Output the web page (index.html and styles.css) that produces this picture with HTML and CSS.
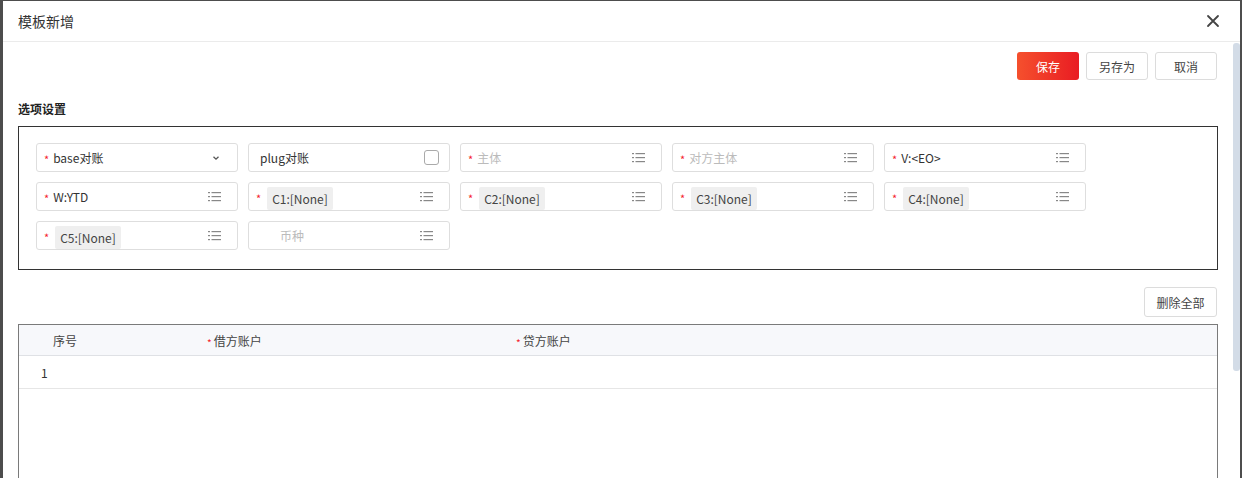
FILE: index.html
```html
<!DOCTYPE html>
<html lang="zh-CN">
<head>
  <meta charset="UTF-8">
  <title>模板新增</title>
  <link rel="stylesheet" href="styles.css">
</head>
<body>
  <div class="modal">
    <div class="modal-header">
      <span class="modal-title">模板新增</span>
      <svg class="close" width="14" height="14" viewBox="0 0 14 14"><path d="M2 2L12 12M12 2L2 12" stroke="#444" stroke-width="1.8" stroke-linecap="round"/></svg>
    </div>
    <div class="modal-body">
      <div class="content">
        <div class="toolbar">
          <button class="btn btn-primary">保存</button>
          <button class="btn">另存为</button>
          <button class="btn">取消</button>
        </div>

        <div class="section-title">选项设置</div>

        <div class="options">
          <div class="field">
            <span class="req">*</span><span class="val">base对账</span>
            <svg class="ico" width="10" height="10" viewBox="0 0 10 10"><path d="M2.5 3.8L5 6.2L7.5 3.8" fill="none" stroke="#555" stroke-width="1.3"/></svg>
          </div>
          <div class="field">
            <span class="val plain">plug对账</span>
            <span class="checkbox"></span>
          </div>
          <div class="field">
            <span class="req">*</span><span class="val ph">主体</span>
            <svg class="ico list" width="13" height="11" viewBox="0 0 13 11"><g fill="#888"><rect x="0" y="1" width="2" height="1.2"/><rect x="0" y="5" width="2" height="1.2"/><rect x="0" y="9" width="2" height="1.2"/><rect x="3.5" y="1" width="9.5" height="1.2"/><rect x="3.5" y="5" width="9.5" height="1.2"/><rect x="3.5" y="9" width="9.5" height="1.2"/></g></svg>
          </div>
          <div class="field">
            <span class="req">*</span><span class="val ph">对方主体</span>
            <svg class="ico list" width="13" height="11" viewBox="0 0 13 11"><g fill="#888"><rect x="0" y="1" width="2" height="1.2"/><rect x="0" y="5" width="2" height="1.2"/><rect x="0" y="9" width="2" height="1.2"/><rect x="3.5" y="1" width="9.5" height="1.2"/><rect x="3.5" y="5" width="9.5" height="1.2"/><rect x="3.5" y="9" width="9.5" height="1.2"/></g></svg>
          </div>
          <div class="field">
            <span class="req">*</span><span class="val">V:&lt;EO&gt;</span>
            <svg class="ico list" width="13" height="11" viewBox="0 0 13 11"><g fill="#888"><rect x="0" y="1" width="2" height="1.2"/><rect x="0" y="5" width="2" height="1.2"/><rect x="0" y="9" width="2" height="1.2"/><rect x="3.5" y="1" width="9.5" height="1.2"/><rect x="3.5" y="5" width="9.5" height="1.2"/><rect x="3.5" y="9" width="9.5" height="1.2"/></g></svg>
          </div>

          <div class="field">
            <span class="req">*</span><span class="val">W:YTD</span>
            <svg class="ico list" width="13" height="11" viewBox="0 0 13 11"><g fill="#888"><rect x="0" y="1" width="2" height="1.2"/><rect x="0" y="5" width="2" height="1.2"/><rect x="0" y="9" width="2" height="1.2"/><rect x="3.5" y="1" width="9.5" height="1.2"/><rect x="3.5" y="5" width="9.5" height="1.2"/><rect x="3.5" y="9" width="9.5" height="1.2"/></g></svg>
          </div>
          <div class="field">
            <span class="req">*</span><span class="tag">C1:[None]</span>
            <svg class="ico list" width="13" height="11" viewBox="0 0 13 11"><g fill="#888"><rect x="0" y="1" width="2" height="1.2"/><rect x="0" y="5" width="2" height="1.2"/><rect x="0" y="9" width="2" height="1.2"/><rect x="3.5" y="1" width="9.5" height="1.2"/><rect x="3.5" y="5" width="9.5" height="1.2"/><rect x="3.5" y="9" width="9.5" height="1.2"/></g></svg>
          </div>
          <div class="field">
            <span class="req">*</span><span class="tag">C2:[None]</span>
            <svg class="ico list" width="13" height="11" viewBox="0 0 13 11"><g fill="#888"><rect x="0" y="1" width="2" height="1.2"/><rect x="0" y="5" width="2" height="1.2"/><rect x="0" y="9" width="2" height="1.2"/><rect x="3.5" y="1" width="9.5" height="1.2"/><rect x="3.5" y="5" width="9.5" height="1.2"/><rect x="3.5" y="9" width="9.5" height="1.2"/></g></svg>
          </div>
          <div class="field">
            <span class="req">*</span><span class="tag">C3:[None]</span>
            <svg class="ico list" width="13" height="11" viewBox="0 0 13 11"><g fill="#888"><rect x="0" y="1" width="2" height="1.2"/><rect x="0" y="5" width="2" height="1.2"/><rect x="0" y="9" width="2" height="1.2"/><rect x="3.5" y="1" width="9.5" height="1.2"/><rect x="3.5" y="5" width="9.5" height="1.2"/><rect x="3.5" y="9" width="9.5" height="1.2"/></g></svg>
          </div>
          <div class="field">
            <span class="req">*</span><span class="tag">C4:[None]</span>
            <svg class="ico list" width="13" height="11" viewBox="0 0 13 11"><g fill="#888"><rect x="0" y="1" width="2" height="1.2"/><rect x="0" y="5" width="2" height="1.2"/><rect x="0" y="9" width="2" height="1.2"/><rect x="3.5" y="1" width="9.5" height="1.2"/><rect x="3.5" y="5" width="9.5" height="1.2"/><rect x="3.5" y="9" width="9.5" height="1.2"/></g></svg>
          </div>

          <div class="field">
            <span class="req">*</span><span class="tag">C5:[None]</span>
            <svg class="ico list" width="13" height="11" viewBox="0 0 13 11"><g fill="#888"><rect x="0" y="1" width="2" height="1.2"/><rect x="0" y="5" width="2" height="1.2"/><rect x="0" y="9" width="2" height="1.2"/><rect x="3.5" y="1" width="9.5" height="1.2"/><rect x="3.5" y="5" width="9.5" height="1.2"/><rect x="3.5" y="9" width="9.5" height="1.2"/></g></svg>
          </div>
          <div class="field">
            <span class="val ph plain-ph">币种</span>
            <svg class="ico list" width="13" height="11" viewBox="0 0 13 11"><g fill="#888"><rect x="0" y="1" width="2" height="1.2"/><rect x="0" y="5" width="2" height="1.2"/><rect x="0" y="9" width="2" height="1.2"/><rect x="3.5" y="1" width="9.5" height="1.2"/><rect x="3.5" y="5" width="9.5" height="1.2"/><rect x="3.5" y="9" width="9.5" height="1.2"/></g></svg>
          </div>
        </div>

        <div class="table-tools">
          <button class="btn btn-wide">删除全部</button>
        </div>

        <div class="grid-table">
          <div class="tr th">
            <div class="cell c-seq">序号</div>
            <div class="cell c-debit"><span class="req">*</span>借方账户</div>
            <div class="cell c-credit"><span class="req">*</span>贷方账户</div>
          </div>
          <div class="tr">
            <div class="cell c-seq-row">1</div>
            <div class="cell c-debit"></div>
            <div class="cell c-credit"></div>
          </div>
        </div>
      </div>
      <div class="scroll-thumb"></div>
    </div>
  </div>
</body>
</html>
```

FILE: styles.css
```css
html, body {
  margin: 0;
  height: 478px;
  overflow: hidden;
}
body {
  background-color: #4d4d4d;
  font-family: "Noto Sans CJK SC", "Noto Sans", sans-serif;
  font-size: 12px;
  color: #333;
}
.modal {
  margin: 1px 2px 0 3px;
  height: 477px;
  background-color: #fff;
  display: flex;
  flex-direction: column;
  overflow: hidden;
}
.modal-header {
  height: 40px;
  flex: none;
  border-bottom: 1px solid #ebebeb;
  display: flex;
  align-items: center;
  justify-content: space-between;
  padding: 0 20px 0 15px;
}
.modal-title {
  font-size: 14px;
  color: #333;
}
.modal-body {
  flex: 1;
  position: relative;
  padding: 0 22px 0 15px;
}
.scroll-thumb {
  position: absolute;
  right: 0;
  top: 1px;
  width: 7px;
  height: 328px;
  background-color: #d3dce7;
  border-radius: 3px;
}

.toolbar {
  display: flex;
  justify-content: flex-end;
  gap: 7px;
  padding-top: 10px;
  padding-right: 1px;
}
.btn {
  height: 28px;
  width: 62px;
  border: 1px solid #dcdcdc;
  border-radius: 3px;
  background: #fff;
  color: #444;
  font-family: inherit;
  font-size: 12px;
  padding: 0;
  cursor: pointer;
}
.btn-primary {
  border: none;
  color: #fff;
  background: linear-gradient(90deg, #f5502d, #e91c23);
}
.btn-wide {
  width: 73px;
  height: 30px;
}

.section-title {
  margin-top: 20px;
  font-weight: bold;
  font-size: 12px;
  line-height: 18px;
  color: #222;
}
.options {
  margin-top: 8px;
  border: 1px solid #333;
  padding: 16px 17px 19px 17px;
  display: grid;
  grid-template-columns: repeat(5, 202px);
  column-gap: 10px;
  row-gap: 10px;
}
.field {
  height: 29px;
  box-sizing: border-box;
  border: 1px solid #dedede;
  border-radius: 3px;
  display: flex;
  align-items: center;
  padding: 0 16px 0 7px;
}
.req {
  color: #f5222d;
  font-size: 11px;
  margin-right: 4px;
  position: relative;
  top: 1px;
}
.val {
  flex: 1;
  color: #333;
  white-space: nowrap;
}
.val.plain {
  padding-left: 4px;
}
.ph {
  color: #bbb;
}
.plain-ph {
  padding-left: 24px;
}
.tag {
  background-color: #efefef;
  border-radius: 2px;
  height: 23px;
  line-height: 23px;
  padding: 0 5px;
  margin-left: 2px;
  margin-top: 4px;
  color: #444;
}
.ico {
  flex: none;
  margin-left: auto;
}
.field .val + .ico {
  margin-left: 0;
}
.checkbox {
  width: 13px;
  height: 13px;
  border: 1px solid #aaa;
  border-radius: 3px;
  margin-right: -6px;
}

.table-tools {
  display: flex;
  justify-content: flex-end;
  margin-top: 17px;
  padding-right: 1px;
}
.grid-table {
  margin-top: 7px;
  border: 1px solid #7a7a7a;
  border-bottom: none;
  height: 200px;
}
.tr {
  display: flex;
  height: 32px;
  border-bottom: 1px solid #e6e6e6;
  align-items: center;
}
.tr.th {
  height: 29px;
  padding-top: 1px;
  align-items: flex-start;
  line-height: 30px;
  background-color: #f7f8fb;
  border-bottom: 1px solid #dfe1e5;
}
.cell {
  color: #333;
}
.th .cell {
  color: #444;
}
.c-seq {
  width: 152px;
  padding-left: 34px;
}
.c-seq-row {
  width: 164px;
  padding-left: 22px;
}
.c-debit {
  width: 311px;
}
.th .c-debit {
  padding-left: 2px;
  width: 309px;
}
.c-credit {
  flex: 1;
}
.th .req {
  font-size: 10px;
  margin-right: 2px;
}
```
